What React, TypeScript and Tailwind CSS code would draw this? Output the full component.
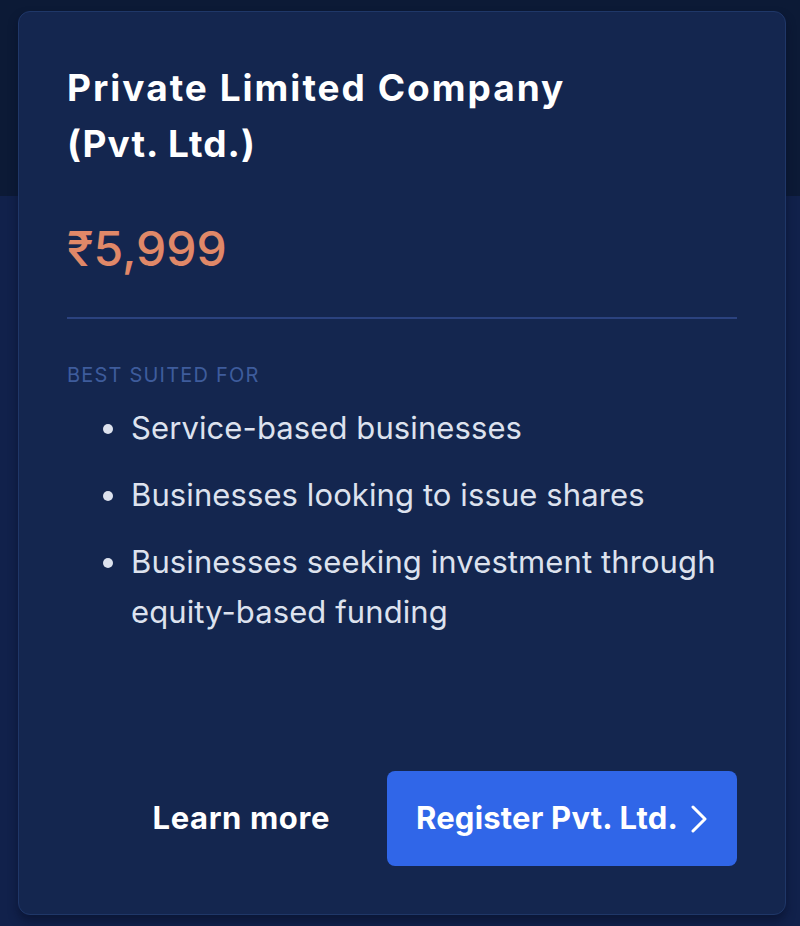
import React from "react";

export default function App() {
  const items = [
    "Service-based businesses",
    "Businesses looking to issue shares",
    "Businesses seeking investment through equity-based funding",
  ];
  return (
    <div
      className="w-[800px] h-[926px] overflow-hidden bg-[linear-gradient(to_bottom,#0c1a36_196px,#11214b_196px)] pt-[11px] pl-[18px]"
      style={{ fontFamily: "Inter, 'Noto Sans', sans-serif" }}
    >
      <div className="w-[768px] h-[904px] rounded-xl border border-[#1f3768] bg-[#14264f] shadow-[0_6px_10px_rgba(5,12,35,0.5)] px-12 pt-12 pb-12 flex flex-col">
        <h1 className="text-[37px] leading-[56px] font-bold text-white tracking-[2px]">
          Private Limited Company
          <br />
          <span className="tracking-[1px]">(Pvt. Ltd.)</span>
        </h1>
        <div className="mt-[47px] text-[48px] leading-[60px] text-[#e08868] font-medium">
          ₹5,999
        </div>
        <div className="mt-[38px] h-[2px] bg-[#2b427f]" />
        <div className="mt-[42px] text-[20px] leading-[28px] text-[#3e5c9c] uppercase tracking-[1.2px]">
          Best suited for
        </div>
        <ul className="mt-[14px] flex flex-col gap-[17px] pl-[63px] list-disc text-[#dde2ee] text-[31px] leading-[50px] tracking-[0.1px] marker:text-[#dde2ee]">
          {items.map((t) => (
            <li key={t} className="pl-[1px]">
              {t}
            </li>
          ))}
        </ul>
        <div className="mt-auto flex justify-end items-center gap-[33px]">
          <button className="h-[95px] px-6 text-[31px] font-bold text-white tracking-[0.6px]">
            Learn more
          </button>
          <button className="h-[95px] w-[350px] rounded-lg bg-[#3066e8] text-white text-[31px] font-bold tracking-[0.2px] flex items-center justify-center gap-[12px]">
            Register Pvt. Ltd.
            <svg width="18" height="28" viewBox="0 0 18 28" fill="none">
              <path d="M3 2 L15 14 L3 26" stroke="white" strokeWidth="3" strokeLinecap="round" strokeLinejoin="round" />
            </svg>
          </button>
        </div>
      </div>
    </div>
  );
}
